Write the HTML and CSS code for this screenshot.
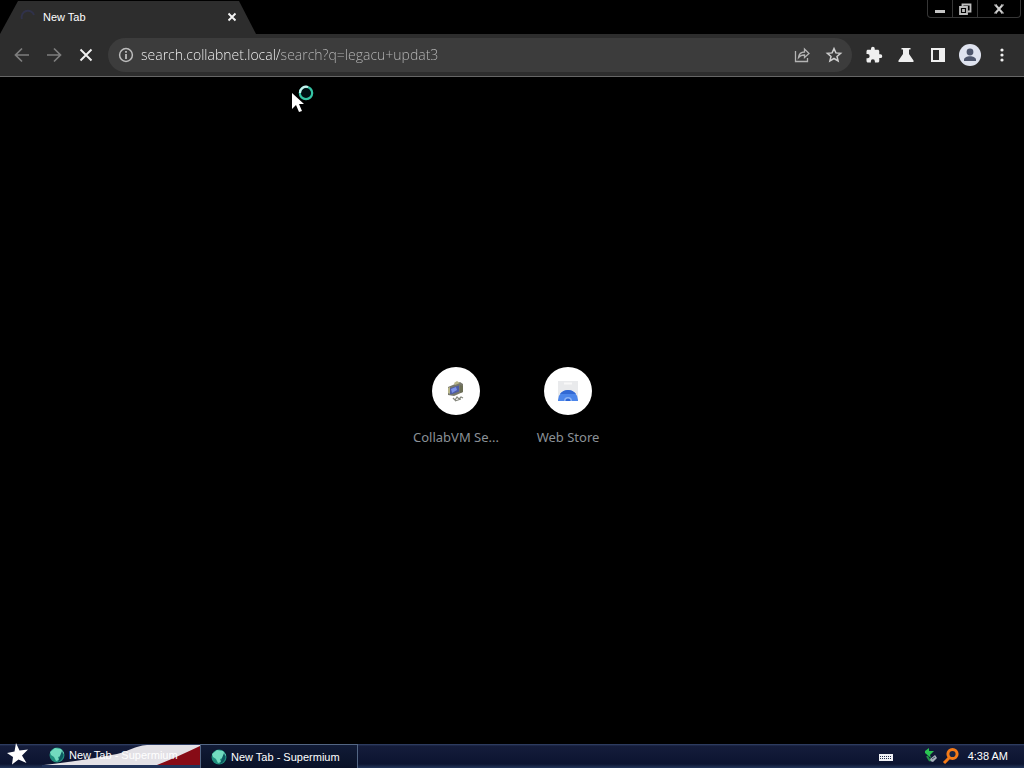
FILE: index.html
```html
<!DOCTYPE html>
<html lang="en">
<head>
<meta charset="utf-8">
<title>New Tab - Supermium</title>
<link rel="stylesheet" href="styles.css">
</head>
<body>
<header class="browser">
  <div class="titlebar">
    <div class="tab">
      <svg class="throbber" width="16" height="16" viewBox="0 0 16 16"><path d="M2 10A6 6 0 0 1 14 6" fill="none" stroke="#30324a" stroke-width="2"/></svg>
      <span class="tab-title">New Tab</span>
      <button class="tab-close" aria-label="Close tab"><svg width="10" height="10" viewBox="0 0 10 10"><path d="M1.500 1.500l7 7M8.500 1.500l-7 7" stroke="#f4f4f4" stroke-width="1.900"/></svg></button>
    </div>
    <div class="window-buttons">
      <button class="win" aria-label="Minimize"><svg width="24" height="16" viewBox="0 0 24 16"><path d="M7 9h10v3H7z" fill="#c4c4c4"/></svg></button>
      <button class="win" aria-label="Restore"><svg width="24" height="16" viewBox="0 0 24 16"><path d="M9.500 5V3.500h8v7H15M7 6h7v7H7zM10 9h1v1h-1z" fill="none" stroke="#bdbdbd" stroke-width="1.800"/></svg></button>
      <button class="win win-close" aria-label="Close"><svg width="24" height="16" viewBox="0 0 24 16"><path d="M8.500 4l7 8M15.500 4l-7 8" stroke="#d0d0d0" stroke-width="2"/><path d="M7 4h3M14 4h3M7 12h3M14 12h3" stroke="#b0b0b0"/></svg></button>
    </div>
  </div>
  <nav class="toolbar">
    <button class="tool" aria-label="Back"><svg width="20" height="20" viewBox="0 0 20 20"><path d="M17 10H4M10 3.500L3.500 10l6.500 6.500" fill="none" stroke="#7e7e7e" stroke-width="1.700"/></svg></button>
    <button class="tool" aria-label="Forward"><svg width="20" height="20" viewBox="0 0 20 20"><path d="M3 10h13M10 3.500l6.500 6.500-6.500 6.500" fill="none" stroke="#7e7e7e" stroke-width="1.700"/></svg></button>
    <button class="tool" aria-label="Stop"><svg width="20" height="20" viewBox="0 0 20 20"><path d="M4.500 4.500l11 11M15.500 4.500l-11 11" stroke="#f1f1f1" stroke-width="1.900"/></svg></button>
    <div class="omnibox">
      <button class="tool small" aria-label="View site information"><svg width="16" height="16" viewBox="0 0 16 16"><circle cx="8" cy="8" r="6.400" fill="none" stroke="#bcbcbc" stroke-width="1.500"/><path d="M8 7v5M8 4v1.800" stroke="#bcbcbc" stroke-width="1.800"/></svg></button>
      <input class="address" type="text" aria-label="Address" value="search.collabnet.local/search?q=legacu+updat3" spellcheck="false">
      <button class="tool" aria-label="Share"><svg width="18" height="18" viewBox="0 0 18 18"><path d="M2.500 5v10.500h12V12M5.500 11.500c.5-4 3-5.500 6-5.500V3l4.500 4.500-4.500 4V9c-2.500 0-4.500.5-6 2.500z" fill="none" stroke="#b4b4b4" stroke-width="1.300"/></svg></button>
      <button class="tool" aria-label="Bookmark"><svg width="18" height="18" viewBox="0 0 18 18"><path d="M9 2.600l1.900 4.300 4.700.4-3.600 3.100 1.100 4.600L9 12.500 4.900 15 6 10.400 2.400 7.300l4.700-.4z" fill="none" stroke="#cecece" stroke-width="1.500"/></svg></button>
    </div>
    <button class="tool" aria-label="Extensions"><svg width="18" height="18" viewBox="0 0 24 24"><path fill="#f0f0f0" d="M20.500 11H19V7c0-1.100-.9-2-2-2h-4V3.500a2.500 2.500 0 0 0-5 0V5H4c-1.100 0-2 .9-2 2v3.800h1.500a2.700 2.700 0 0 1 0 5.400H2V20c0 1.100.9 2 2 2h3.800v-1.500a2.700 2.700 0 0 1 5.400 0V22H17c1.100 0 2-.9 2-2v-4h1.500a2.500 2.500 0 0 0 0-5z"/></svg></button>
    <button class="tool" aria-label="Experiments"><svg width="18" height="18" viewBox="0 0 18 18"><path fill="#f0f0f0" d="M4.500 2h9v1.500H12V8l4.500 6.500V16h-15v-1.500L6 8V3.500H4.500z"/></svg></button>
    <button class="tool" aria-label="Side panel"><svg width="18" height="18" viewBox="0 0 18 18"><path fill="#f0f0f0" fill-rule="evenodd" d="M2 2h14v14H2zM4 4v10h6V4z"/></svg></button>
    <button class="tool" aria-label="Profile"><svg width="24" height="24" viewBox="0 0 24 24"><circle cx="12" cy="12" r="11" fill="#dfe3ef"/><circle cx="12" cy="9" r="3.400" fill="#4e566c"/><path d="M6 17c0-5 12-5 12 0v1H6z" fill="#4e566c"/></svg></button>
    <button class="tool" aria-label="Menu"><svg width="18" height="18" viewBox="0 0 18 18"><g fill="#f0f0f0"><circle cx="9" cy="4" r="1.600"/><circle cx="9" cy="9" r="1.600"/><circle cx="9" cy="14" r="1.600"/></g></svg></button>
  </nav>
</header>

<main class="page">
  <a class="tile" href="#collabvm">
    <span class="tile-icon"><svg width="24" height="24" viewBox="0 0 24 24"><path d="M4 8l12-5 3 2v8l-9 4-6-1z" fill="#77776b"/><path d="M5 9.500l10-3v6l-8 3-2-1z" fill="#4d5ca5"/><path d="M7 10l5-2 1 3-5 3z" fill="#7b91ea"/><path d="M10 4l3-2 3 2-5 2zM4 9l2-1v7l-2-1z" fill="#b8b58a"/><path d="M16 6l3 1v6l-3 1z" fill="#6c6e55"/><path d="M9 19l2 2 2-3 2 2 2-2 2 1M11 22l6-2" fill="none" stroke="#85877d" stroke-width="1.200"/></svg></span>
    <span class="tile-label">CollabVM Se...</span>
  </a>
  <a class="tile" href="#webstore">
    <span class="tile-icon"><svg width="24" height="24" viewBox="0 0 24 24"><path d="M2 2h20v18a2 2 0 0 1-2 2H4a2 2 0 0 1-2-2z" fill="#e9eaec"/><path d="M8 4.500h8" stroke="#f8f8f8" stroke-width="2"/><path d="M2 21a10 10 0 0 1 20 0v1H2z" fill="#4c86ea"/><path d="M4 15a10 10 0 0 1 16 0H12z" fill="#3269d4"/><path d="M8 22a4 4 0 0 1 8 0z" fill="#8bb3f6"/><path d="M9.500 22a2.500 2.500 0 0 1 5 0z" fill="#2b63d5"/></svg></span>
    <span class="tile-label">Web Store</span>
  </a>
</main>

<footer class="taskbar">
  <button class="start" aria-label="Start"><svg width="24" height="24" viewBox="0 0 24 24"><path d="M10 0l3.500 7.500 8.500-1-6 6 4.500 7.500-8-3.500L6 21.500 7 14 1 10l7.500-1.500z" fill="#fff"/></svg></button>
  <button class="task flag">
    <svg class="flag-art" viewBox="0 0 158 22" preserveAspectRatio="none"><path d="M2 20C35 16 55 13 75 9 88 6 92 1 105 0h53v22H2z" fill="#e3e1e6"/><path d="M115 20Q133 13 158 1v19z" fill="#870b16"/><path d="M0 20h158v2H0z" fill="#20335a"/></svg>
    <svg class="globe" width="18" height="18" viewBox="0 0 18 18"><circle cx="9" cy="9" r="7.500" fill="#218f7e"/><path d="M2 6l5-4 6 1 3 4-3 3-3 1 1 3-3 1-2-4-3-2z" fill="#72dbbf"/><path d="M14 5c3 5 0 9-4 11l2-6z" fill="#0d5960"/></svg>
    <span class="task-text">New Tab - Supermium</span>
  </button>
  <button class="task active">
    <svg class="globe" width="18" height="18" viewBox="0 0 18 18"><circle cx="9" cy="9" r="7.500" fill="#218f7e"/><path d="M2 6l5-4 6 1 3 4-3 3-3 1 1 3-3 1-2-4-3-2z" fill="#72dbbf"/><path d="M14 5c3 5 0 9-4 11l2-6z" fill="#0d5960"/></svg>
    <span class="task-text">New Tab - Supermium</span>
  </button>
  <div class="tray">
    <button class="keyboard" aria-label="Keyboard"><svg width="16" height="16" viewBox="0 0 16 16"><path d="M1 6h14v7H1z" fill="#f0f1f5"/><path d="M2 8.500h12M2 10.500h12" stroke="#27304a" stroke-dasharray="1 1"/></svg></button>
    <button aria-label="Safely remove hardware"><svg width="18" height="18" viewBox="0 0 18 18"><path d="M3 4l4-3v3h5L8 8l1 3-6-5z" fill="#2bc452"/><path d="M8 12l5-4 2 3-4 4-3-1z" fill="#a7b1bd"/><path d="M10 12l3-2" stroke="#445064"/><path d="M5 9l3 5" stroke="#239548" stroke-width="2"/></svg></button>
    <button aria-label="Search"><svg width="18" height="18" viewBox="0 0 18 18"><circle cx="10.500" cy="7" r="4.600" fill="#172444" stroke="#f47b18" stroke-width="3"/><path d="M7 11l-5 5" stroke="#f47b18" stroke-width="3"/></svg></button>
    <time class="clock">4:38 AM</time>
  </div>
</footer>

<svg class="pointer" width="28" height="30" viewBox="0 0 28 30"><path d="M2 9v16l4-4 3 7 3-1-3-7h5z" fill="#fff"/><circle cx="16" cy="9" r="6.200" fill="#001014" stroke="#35c5a5" stroke-width="2.200"/><path d="M10 9a6.200 6.200 0 0 1 8-6" fill="none" stroke="#c6f0ed" stroke-width="2.200"/></svg>
</body>
</html>
```

FILE: styles.css
```css
* { box-sizing: border-box; }
body {
  margin: 0;
  min-height: 100vh;
  display: flex;
  flex-direction: column;
  background: #000;
  color: #fff;
  font-family: "Liberation Sans", sans-serif;
  font-size: 11px;
}
button {
  display: flex;
  align-items: center;
  justify-content: center;
  padding: 0;
  border: 0;
  background: none;
  color: inherit;
  font: inherit;
}
svg { display: block; flex: none; }

.titlebar {
  display: flex;
  justify-content: space-between;
  align-items: flex-start;
  height: 34px;
}
.tab {
  display: flex;
  align-items: center;
  gap: 7px;
  width: 256px;
  height: 34px;
  padding: 0 19px 0 20px;
  background: #2d2d2d;
  clip-path: polygon(18px 1px, 239px 1px, 256px 34px, 0 34px);
}
.tab-title { flex: 1; }
.window-buttons {
  display: flex;
  margin-right: 3px;
  border: 1px solid #363636;
  border-top: 0;
  border-radius: 0 0 4px 4px;
}
.win { width: 25px; height: 17px; border-right: 1px solid #363636; }
.win-close { width: 42px; border-right: 0; }

.toolbar {
  display: flex;
  align-items: center;
  padding: 4px 6px 4px;
  background: #2d2d2d;
  border-bottom: 1px solid #666;
}
.tool { width: 32px; height: 34px; }
.small { width: 20px; }
.omnibox {
  flex: 1;
  display: flex;
  align-items: center;
  margin: 0 6px;
  padding-left: 8px;
  padding-right: 2px;
  border-radius: 17px;
  background: #3c3c3c;
}
.address {
  flex: 1;
  min-width: 0;
  height: 30px;
  margin-left: 5px;
  padding: 0 0 2px;
  border: 0;
  outline: 0;
  font: 300 14px "Open Sans", sans-serif;
  color: transparent;
  background: linear-gradient(90deg, #fff 139px, #bcbcbc 139px);
  -webkit-background-clip: text;
  background-clip: text;
}

.page {
  flex: 1;
  display: flex;
  align-items: center;
  justify-content: center;
}
.tile {
  display: flex;
  flex-direction: column;
  align-items: center;
  gap: 12px;
  width: 112px;
  padding-bottom: 8px;
  color: #8b9197;
  font-family: "Noto Sans", sans-serif;
  font-size: 13px;
  line-height: 20px;
  text-decoration: none;
}
.tile-icon {
  display: grid;
  place-items: center;
  width: 48px;
  height: 48px;
  border-radius: 50%;
  background: #fff;
}

.taskbar {
  display: flex;
  align-items: stretch;
  height: 24px;
  background: linear-gradient(#34456b, #151d3b 2px, #0c1430 20px, #23365b);
}
.start { width: 36px; padding-bottom: 2px; }
.task {
  position: relative;
  justify-content: flex-start;
  gap: 3px;
  width: 158px;
  padding-left: 9px;
}
.flag { width: 164px; padding-left: 12px; padding-bottom: 2px; }
.flag-art {
  position: absolute;
  inset: 1px 0 1px 6px;
  width: 158px;
  height: 22px;
}
.globe, .task-text { position: relative; }
.active {
  border: 1px solid #536684;
  border-bottom: 0;
  background: linear-gradient(#111b36, #091127);
}
.tray {
  display: flex;
  align-items: center;
  gap: 2px;
  margin-left: auto;
  padding-right: 16px;
}
.keyboard { margin-right: 26px; }
.clock { margin-left: 6px; }
.pointer {
  position: absolute;
  left: 290px;
  top: 84px;
  pointer-events: none;
}
```
